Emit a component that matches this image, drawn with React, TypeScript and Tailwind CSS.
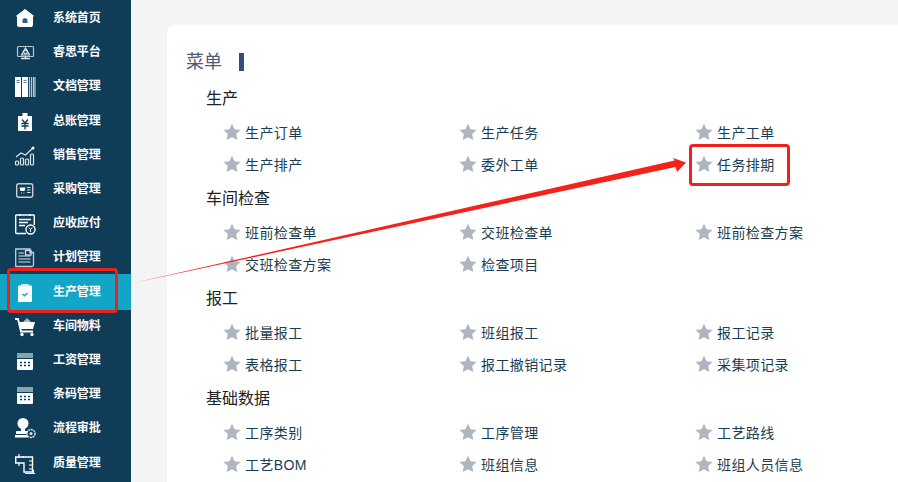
import React from 'react';

const FONT = '"Liberation Sans", "Noto Sans CJK SC", sans-serif';
const NAVY = '#0f3d58';

const Ico = ({ children }: { children: React.ReactNode }) => (
  <svg width="26" height="24" viewBox="0 0 26 24" fill="none" stroke="#fff" strokeWidth="1.2">
    {children}
  </svg>
);

const Calendar = () => (
  <Ico>
    <rect x="4" y="5" width="16" height="5" fill="#8aa0ae" stroke="none" />
    <path d="M4 11 H20 V21 Q20 22 19 22 H5 Q4 22 4 21 Z" fill="#fff" stroke="none" />
    <path d="M7 14.5 H9 M11 14.5 H13 M15 14.5 H17 M7 17.5 H9 M11 17.5 H13 M15 17.5 H17" stroke={NAVY} strokeWidth="1.6" />
  </Ico>
);

const navItems: { label: string; icon: React.ReactNode; active?: boolean }[] = [
  {
    label: '系统首页',
    icon: (
      <Ico>
        <path d="M12 3.5 L20.5 10 H19.5 V19.5 Q19.5 20.5 18.5 20.5 H5.5 Q4.5 20.5 4.5 19.5 V10 H3.5 Z" fill="#fff" strokeWidth="1" strokeLinejoin="round" />
        <path d="M9.5 17 V13.5 Q12 10.5 14.5 13.5 V17 Z" fill="#3b6075" stroke="none" />
      </Ico>
    ),
  },
  {
    label: '睿思平台',
    icon: (
      <Ico>
        <rect x="4.5" y="6.5" width="16" height="10" rx="1" stroke="#b9c6cf" />
        <path d="M12.5 8 L8.5 15 H16.5 Z" stroke="#dfe6ea" />
        <circle cx="12.5" cy="12" r="1.8" stroke="#dfe6ea" />
        <path d="M8 18.5 H17 M12.5 16.5 V18.5" stroke="#dfe6ea" strokeWidth="1.4" />
      </Ico>
    ),
  },
  {
    label: '文档管理',
    icon: (
      <Ico>
        <rect x="2" y="3" width="6" height="20" fill="#fff" stroke="none" />
        <rect x="9" y="3" width="6" height="20" fill="#fff" stroke="none" />
        <path d="M3.5 6.5 H6.5 M3.5 8.5 H6.5 M10.5 6.5 H13.5 M10.5 8.5 H13.5" stroke="#5d7a8c" strokeWidth="1" />
        <path d="M16.5 3 V23 M18.5 3 V23 M20.5 3 V23 M22 3 V23" stroke="#b9c6cf" strokeWidth="1.2" />
      </Ico>
    ),
  },
  {
    label: '总账管理',
    icon: (
      <Ico>
        <path d="M5 7 H9.5 V4 H14.5 V7 H19 V22 H5 Z" fill="#fff" stroke="none" />
        <path d="M9 10.5 L12 14 L15 10.5 M8.5 14.5 H15.5 M8.5 17 H15.5 M12 14 V20.5" stroke={NAVY} strokeWidth="1.3" />
      </Ico>
    ),
  },
  {
    label: '销售管理',
    icon: (
      <Ico>
        <path d="M3 14 L8 10 L12.5 12 L20 5" stroke="#dfe6ea" />
        <circle cx="20" cy="5" r="1.5" fill="#fff" stroke="none" />
        <rect x="2.5" y="18" width="3" height="4" rx="1" stroke="#dfe6ea" />
        <rect x="7.5" y="15" width="3" height="7" rx="1" stroke="#dfe6ea" />
        <rect x="12.5" y="16" width="3" height="6" rx="1" stroke="#dfe6ea" />
        <rect x="17.5" y="11" width="3" height="11" rx="1" stroke="#dfe6ea" />
      </Ico>
    ),
  },
  {
    label: '采购管理',
    icon: (
      <Ico>
        <rect x="3.7" y="6.7" width="16" height="13.5" rx="2" stroke="#c5d0d8" strokeWidth="1.4" />
        <path d="M6.5 10.5 H12.5 L11.5 14 H7.5 Z" fill="#fff" stroke="none" />
        <path d="M14 10.5 H17.5 M14 13 H17.5 M14 15.5 H17.5" stroke="#dfe6ea" />
        <path d="M8 16 H8.8 M10.5 16 H11.3" stroke="#fff" />
      </Ico>
    ),
  },
  {
    label: '应收应付',
    icon: (
      <Ico>
        <path d="M13 22.5 H3.5 Q2.7 22.5 2.7 21.5 V5 Q2.7 4 3.5 4 H20.5 Q21.3 4 21.3 5 V14" strokeWidth="1.4" />
        <path d="M7 3 V5 M17 3 V5" strokeWidth="1.4" />
        <path d="M6 8.5 H18 M6 11.5 H15 M6 14.5 H12" strokeWidth="1.3" />
        <circle cx="17.5" cy="18.5" r="4.5" strokeWidth="1.4" fill={NAVY} />
        <path d="M15.8 16.5 L17.5 18.5 L19.2 16.5 M17.5 18.5 V21" strokeWidth="1" />
      </Ico>
    ),
  },
  {
    label: '计划管理',
    icon: (
      <Ico>
        <path d="M2.7 4 H17 V7.5 H20.5 V20 Q20.5 21.5 19 21.5 H2.7 Z" stroke="#c5d0d8" strokeWidth="1.3" />
        <path d="M5.5 8 H11 M5.5 11 H17.5 M5.5 14 H17.5 M5.5 17 H17.5" stroke="#dfe6ea" strokeWidth="1.2" />
        <rect x="12.5" y="5.5" width="5.5" height="4.5" stroke="#dfe6ea" />
      </Ico>
    ),
  },
  {
    label: '生产管理',
    active: true,
    icon: (
      <Ico>
        <path d="M6 5.5 H8.5 V4 H15.5 V5.5 H18 Q19 5.5 19 6.5 V21 Q19 22 18 22 H6 Q5 22 5 21 V6.5 Q5 5.5 6 5.5 Z" fill="#fff" stroke="none" />
        <path d="M8.5 4 H15.5 V6.5 H8.5 Z" fill="#cfeaf2" stroke="none" />
        <path d="M9.5 14 L11.5 15.8 L14.5 13" stroke="#12a5c6" strokeWidth="1.5" />
      </Ico>
    ),
  },
  {
    label: '车间物料',
    icon: (
      <Ico>
        <path d="M2 5 H5 L8 17.5 H20" stroke="#fff" strokeWidth="1.8" />
        <path d="M6 8 H22 L20 15 H7.7 Z" fill="#fff" stroke="none" />
        <path d="M10 8 L14 4 L18 8 Z" fill="#a9b8c2" stroke="none" />
        <circle cx="9" cy="20.5" r="1.7" fill="#fff" stroke="none" />
        <circle cx="19" cy="20.5" r="1.7" fill="#fff" stroke="none" />
      </Ico>
    ),
  },
  { label: '工资管理', icon: <Calendar /> },
  { label: '条码管理', icon: <Calendar /> },
  {
    label: '流程审批',
    icon: (
      <Ico>
        <circle cx="10" cy="7.5" r="5.5" fill="#fff" stroke="none" />
        <path d="M8 11 H12 V15 H16 V18 H3 V16 Q3 15 4 15 H8 Z" fill="#fff" stroke="none" />
        <rect x="2" y="19" width="13" height="2.5" fill="#fff" stroke="none" />
        <circle cx="18" cy="17.5" r="4" fill={NAVY} stroke="#dfe6ea" strokeWidth="1.4" strokeDasharray="2 0.6" />
        <circle cx="18" cy="17.5" r="1.5" fill="#dfe6ea" stroke="none" />
      </Ico>
    ),
  },
  {
    label: '质量管理',
    icon: (
      <Ico>
        <path d="M2.7 6 H19.5 V21 H11 V12 H2.7 Z" strokeWidth="1.4" />
        <path d="M6 3 V7 M10 5 V7 M16 10 H19 M16 14 H19 M16 18 H19 M6 12 V15 M12 22.5 H22 M20.5 19 V23" strokeWidth="1.2" />
      </Ico>
    ),
  },
];

const sections = [
  { title: '生产', items: ['生产订单', '生产任务', '生产工单', '生产排产', '委外工单', '任务排期'] },
  { title: '车间检查', items: ['班前检查单', '交班检查单', '班前检查方案', '交班检查方案', '检查项目'] },
  { title: '报工', items: ['批量报工', '班组报工', '报工记录', '表格报工', '报工撤销记录', '采集项记录'] },
  { title: '基础数据', items: ['工序类别', '工序管理', '工艺路线', '工艺BOM', '班组信息', '班组人员信息'] },
];

function Star() {
  return (
    <svg width="18" height="18" viewBox="0 0 24 24" fill="#adb5c0" className="mb-[3px] shrink-0">
      <path d="M12 1 L15.4 8.3 L23.4 9.3 L17.5 14.8 L19 22.8 L12 18.9 L5 22.8 L6.5 14.8 L0.6 9.3 L8.6 8.3 Z" />
    </svg>
  );
}

export default function App() {
  return (
    <div className="relative flex h-[482px] w-[898px] overflow-hidden bg-[#f3f4f6]" style={{ fontFamily: FONT }}>
      <aside className="flex w-[131px] shrink-0 flex-col bg-[#0f3d58] pt-px">
        {navItems.map((item) => (
          <div
            key={item.label}
            className={
              item.active
                ? 'my-[-0.9px] flex h-[36px] shrink-0 items-center bg-[#12a5c6] pl-[13px]'
                : 'flex h-[34.2px] shrink-0 items-center pl-[13px]'
            }
          >
            <span className="flex w-[40px] shrink-0">{item.icon}</span>
            <span className="text-[12px] font-bold tracking-[-0.1px] text-white">{item.label}</span>
          </div>
        ))}
      </aside>

      <main className="flex-1 pl-[36px] pt-[25px]">
        <div className="h-[470px] rounded-l-lg bg-white pl-[19px] pt-[25px]">
          <div className="flex h-[24px] items-center">
            <span className="text-[18px] leading-none text-[#4a5a78]">菜单</span>
            <span className="ml-[17px] h-[18px] w-[5px] bg-[#364c7d]" />
          </div>
          <div className="pl-[20px] pt-[7px]">
            {sections.map((s) => (
              <section key={s.title}>
                <h2 className="flex h-[36px] items-center text-[16px] font-normal text-[#222]">{s.title}</h2>
                <div className="grid grid-cols-[236px_236px_236px] pl-[17px]">
                  {s.items.map((label) => (
                    <div key={label} className="flex h-[32px] items-center gap-[4px]">
                      <Star />
                      <span className="text-[14px] tracking-[0.4px] text-[#1a3d52]">{label}</span>
                    </div>
                  ))}
                </div>
              </section>
            ))}
          </div>
        </div>
      </main>

      {/* annotations */}
      <div className="absolute left-[7px] top-[268px] h-[45px] w-[111px] rounded border-[3px] border-[#f0201a]" />
      <div className="absolute left-[689px] top-[144px] h-[42px] w-[101px] rounded border-[3px] border-[#f0201a]" />
      <svg className="absolute left-0 top-0" width="898" height="482" viewBox="0 0 898 482" fill="none">
        <path d="M133 283 L674.5 160.5 L673 158 L686 162.5 L677 172 L675.5 167 Z" fill="#f5221b" />
      </svg>
    </div>
  );
}
